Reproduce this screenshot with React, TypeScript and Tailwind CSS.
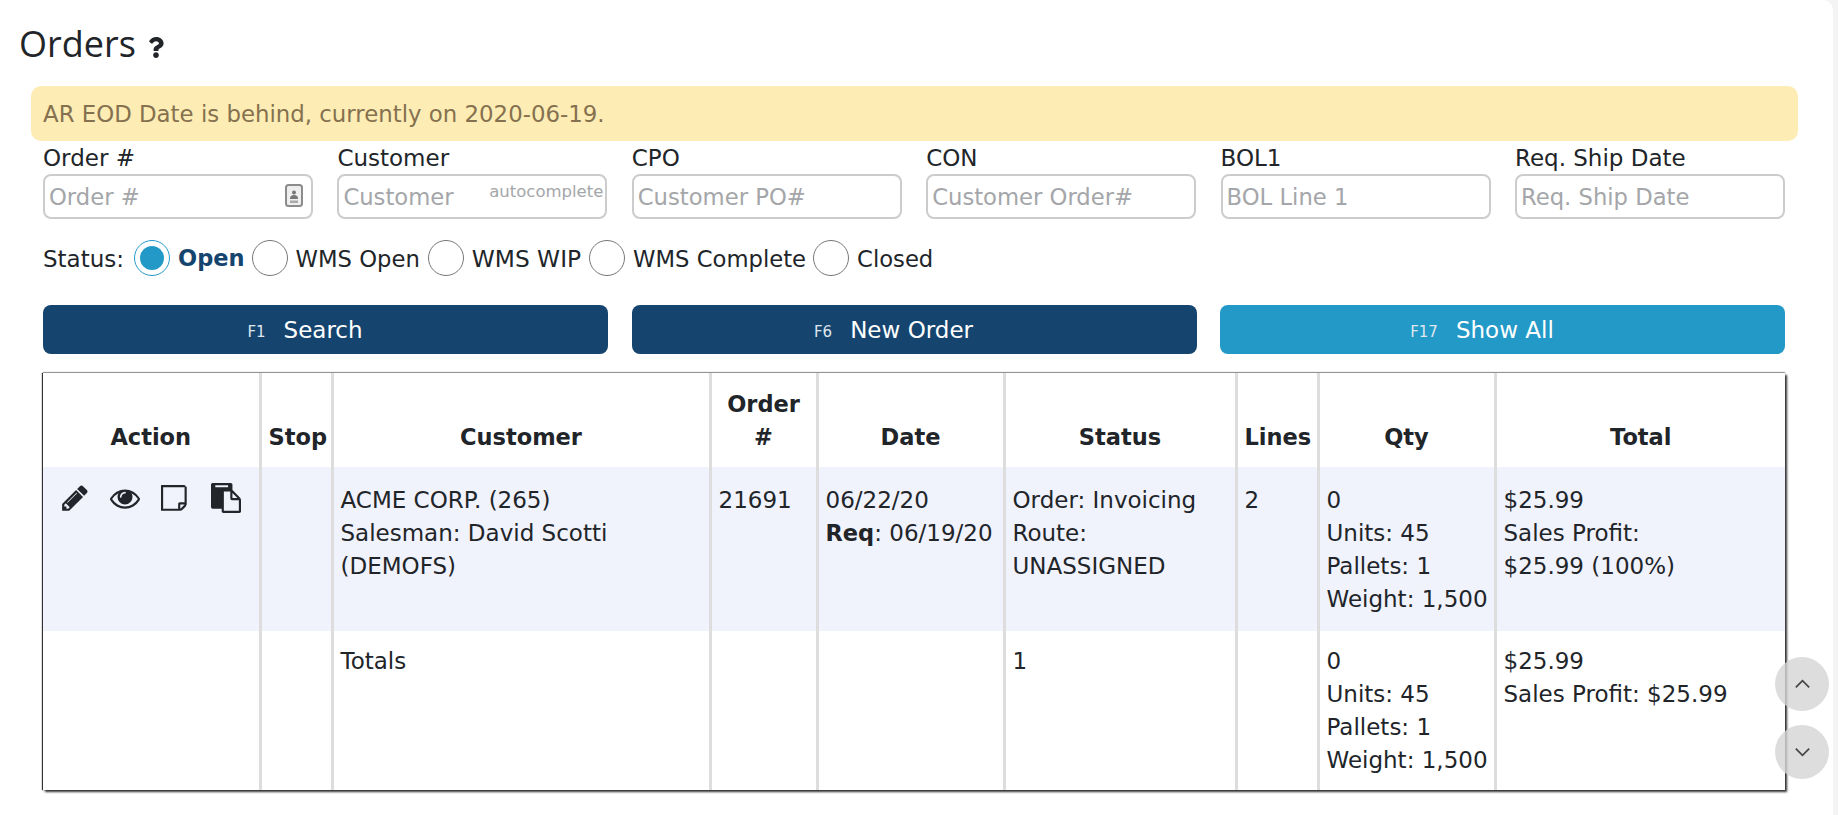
import React from "react";
import { FaQuestion } from "react-icons/fa";

const font = "font-['DejaVu_Sans',sans-serif]";

function Pencil() {
  return (
    <svg viewBox="0 0 1792 1792" className="h-[30px] w-[30px] shrink-0 fill-[#222529]">
      <path d="M491 1536l91-91-235-235-91 91v107h128v128h107zm523-928q0-22-22-22-10 0-17 7l-542 542q-7 7-7 17 0 22 22 22 10 0 17-7l542-542q7-7 7-17zm-54-192l416 416-832 832h-416v-416zm683 96q0 53-37 90l-166 166-416-416 166-165q36-38 90-38 53 0 91 38l235 234q37 39 37 91z" />
    </svg>
  );
}
function Eye() {
  return (
    <svg viewBox="0 0 1792 1792" className="h-[30px] w-[30px] shrink-0 fill-[#222529]">
      <path d="M1664 960q-152-236-381-353 61 104 61 225 0 185-131.5 316.5t-316.5 131.5-316.5-131.5-131.5-316.5q0-121 61-225-229 117-381 353 133 205 333.5 326.5t434.5 121.5 434.5-121.5 333.5-326.5zm-720-384q0-20-14-34t-34-14q-125 0-214.5 89.5t-89.5 214.5q0 20 14 34t34 14 34-14 14-34q0-86 61-147t147-61q20 0 34-14t14-34zm848 384q0 34-20 69-140 230-376.5 368.5t-499.5 138.5-499.5-139-376.5-368q-20-35-20-69t20-69q140-229 376.5-368t499.5-139 499.5 139 376.5 368q20 35 20 69z" />
    </svg>
  );
}
function Note() {
  return (
    <svg viewBox="0 0 1792 1792" className="h-[30px] w-[30px] shrink-0 fill-[#222529]">
      <path d="M1400 1280h-248v248q29-10 41-22l185-185q12-12 22-41zm-280-128h288v-896h-1280v1280h896v-288q0-40 28-68t68-28zm416-928v1024q0 40-20 88t-48 76l-180 180q-28 28-76 48t-88 20h-1088q-40 0-68-28t-28-68v-1344q0-40 28-68t68-28h1344q40 0 68 28t28 68z" />
    </svg>
  );
}
function Paste() {
  return (
    <svg viewBox="0 0 1792 1792" className="h-[30px] w-[30px] shrink-0 fill-[#222529]">
      <path d="M768 1664h896v-640h-416q-40 0-68-28t-28-68v-416h-384v1152zm256-1440v-64q0-13-9.5-22.5t-22.5-9.5h-704q-13 0-22.5 9.5t-9.5 22.5v64q0 13 9.5 22.5t22.5 9.5h704q13 0 22.5-9.5t9.5-22.5zm256 672h299l-299-299v299zm512 128v672q0 40-28 68t-68 28h-960q-40 0-68-28t-28-68v-160h-544q-40 0-68-28t-28-68v-1344q0-40 28-68t68-28h1088q40 0 68 28t28 68v328q21 13 36 28l408 408q28 28 48 76t20 88z" />
    </svg>
  );
}

function Field({ label, ph, extra }: { label: string; ph: string; extra?: React.ReactNode }) {
  return (
    <div className="w-[270px]">
      <div className="h-[33px] pt-[2px] text-[23px] leading-[31px] text-[#212529]">{label}</div>
      <div className="relative h-[45px] rounded-[8px] border-2 border-[#cccccc] bg-white pl-[4px] text-[22.7px] leading-[43px] text-[#a4a6a9]">
        {ph}
        {extra}
      </div>
    </div>
  );
}

function Radio({ on, label, textClass }: { on?: boolean; label: string; textClass?: string }) {
  return (
    <div className="flex items-center">
      <span className={`flex h-[36px] w-[36px] items-center justify-center rounded-full border ${on ? "border-[#2399c8]" : "border-[#777777]"}`}>
        {on && <span className="h-[24px] w-[24px] rounded-full bg-[#2399c8]" />}
      </span>
      <span className={`ml-[8px] pt-[2px] ${on ? "mr-[7px] text-[22.5px] font-bold text-[#15456f]" : textClass ?? "mr-[8px] text-[22.7px] text-[#212529]"}`}>{label}</span>
    </div>
  );
}

function Btn({ fk, label, cyan }: { fk: string; label: string; cyan?: boolean }) {
  return (
    <div className={`flex h-[49px] w-[565px] items-center justify-center rounded-[8px] pr-[41px] pt-[1px] text-white ${cyan ? "bg-[#2399c8]" : "bg-[#15456f]"}`}>
      <span className="mr-[18px] mt-[4px] text-[15px] text-[#dfe6ee]">{fk}</span>
      <span className="text-[23px]">{label}</span>
    </div>
  );
}

const th = "border-l-[3px] border-[#dddddd] px-[7px] pb-[13px] pt-[15px] align-bottom text-center text-[22.5px] font-bold leading-[33px] first:border-l-0";
const td = "whitespace-nowrap border-l-[3px] border-[#dddddd] px-[7px] pt-[17px] pb-[15px] align-top leading-[33px] first:border-l-0";
const tf = "whitespace-nowrap border-l-[3px] border-[#dddddd] px-[7px] pt-[14px] pb-[13px] align-top leading-[33px] first:border-l-0";

export default function App() {
  return (
    <div className={`h-[815px] overflow-hidden bg-[#f4f4f4] ${font}`}>
      <div className="relative h-[815px] w-[1833px] rounded-tr-[10px] bg-white">
        <div className="flex h-[86px] items-start pl-[19px] pt-[19px]">
          <h1 className="font-['Open_Sans',sans-serif] text-[36px] font-normal leading-[50px] text-[#212529]">Orders</h1>
          <FaQuestion className="ml-[12px] mt-[18px] h-[21px] w-[16px] text-[#212529]" />
        </div>
        <div className="ml-[31px] mr-[35px] flex h-[55px] items-center rounded-[10px] bg-[#fdedb4] pl-[12px] pt-[2px] text-[22.85px] text-[#85714f]">
          AR EOD Date is behind, currently on 2020-06-19.
        </div>
        <div className="ml-[43px] mt-0 flex w-[1742px] justify-between">
          <Field
            label="Order #"
            ph="Order #"
            extra={
              <svg viewBox="0 0 18 23" className="absolute right-[8px] top-[8px] h-[23px] w-[18px]">
                <rect x="1" y="1" width="16" height="21" rx="2.5" fill="#eeeeee" stroke="#8c8c8c" strokeWidth="2" />
                <circle cx="9" cy="8.5" r="2" fill="#777777" />
                <path d="M5 15c0-3 1.5-4 4-4s4 1 4 4z" fill="#777777" />
                <rect x="5" y="16.5" width="8" height="2.5" fill="#aaaaaa" />
              </svg>
            }
          />
          <Field
            label="Customer"
            ph="Customer"
            extra={<span className="absolute right-[2px] top-[4px] text-[16.5px] leading-[24px] text-[#a4a6a9]">autocomplete</span>}
          />
          <Field label="CPO" ph="Customer PO#" />
          <Field label="CON" ph="Customer Order#" />
          <Field label="BOL1" ph="BOL Line 1" />
          <Field label="Req. Ship Date" ph="Req. Ship Date" />
        </div>
        <div className="ml-[43px] mt-[21px] flex h-[36px] items-center">
          <span className="mr-[10px] pt-[2px] text-[23px] text-[#212529]">Status:</span>
          <Radio on label="Open" />
          <Radio label="WMS Open" />
          <Radio label="WMS WIP" textClass="mr-[8px] text-[23.3px] text-[#212529]" />
          <Radio label="WMS Complete" textClass="mr-[7px] text-[22.7px] text-[#212529]" />
          <Radio label="Closed" />
        </div>
        <div className="ml-[43px] mt-[29px] flex w-[1742px] justify-between">
          <Btn fk="F1" label="Search" />
          <Btn fk="F6" label="New Order" />
          <Btn fk="F17" label="Show All" cyan />
        </div>
        <div className="ml-[43px] mt-[19px] w-[1742px] shadow-[-1px_0px_1px_#333,2px_2px_2px_#333,0_-1px_1px_#aaa]">
          <table className="w-full table-fixed border-collapse text-[23px] text-[#212529]">
            <colgroup>
              <col className="w-[217px]" />
              <col className="w-[72px]" />
              <col className="w-[378px]" />
              <col className="w-[107px]" />
              <col className="w-[187px]" />
              <col className="w-[232px]" />
              <col className="w-[82px]" />
              <col className="w-[177px]" />
              <col />
            </colgroup>
            <thead>
              <tr>
                <th className={th}>Action</th>
                <th className={th}>Stop</th>
                <th className={th}>Customer</th>
                <th className={th}>Order #</th>
                <th className={th}>Date</th>
                <th className={th}>Status</th>
                <th className={th}>Lines</th>
                <th className={th}>Qty</th>
                <th className={th}>Total</th>
              </tr>
            </thead>
            <tbody>
              <tr className="bg-[#f0f2fc]">
                <td className={td}>
                  <div className="-mt-[1px] flex gap-[20.3px] pl-[10px]">
                    <Pencil />
                    <Eye />
                    <Note />
                    <Paste />
                  </div>
                </td>
                <td className={td}></td>
                <td className={td}>ACME CORP. (265)<br />Salesman: David Scotti<br />(DEMOFS)</td>
                <td className={td}>21691</td>
                <td className={td}>06/22/20<br /><b className="text-[22.5px]">Req</b>: 06/19/20</td>
                <td className={td}>Order: Invoicing<br />Route:<br />UNASSIGNED</td>
                <td className={td}>2</td>
                <td className={td}>0<br />Units: 45<br />Pallets: 1<br />Weight: 1,500</td>
                <td className={td}>$25.99<br />Sales Profit:<br />$25.99 (100%)</td>
              </tr>
              <tr>
                <td className={tf}></td>
                <td className={tf}></td>
                <td className={tf}>Totals</td>
                <td className={tf}></td>
                <td className={tf}></td>
                <td className={tf}>1</td>
                <td className={tf}></td>
                <td className={tf}>0<br />Units: 45<br />Pallets: 1<br />Weight: 1,500</td>
                <td className={tf}>$25.99<br />Sales Profit: $25.99</td>
              </tr>
            </tbody>
          </table>
        </div>
        <div className="absolute left-[1775px] top-[657px] flex h-[54px] w-[54px] items-center justify-center rounded-full bg-[#d4d4d4]/80">
          <svg viewBox="0 0 20 12" className="h-[10px] w-[17px] fill-none stroke-[#444444] stroke-[2]"><path d="M2 10 L10 2 L18 10" /></svg>
        </div>
        <div className="absolute left-[1775px] top-[725px] flex h-[54px] w-[54px] items-center justify-center rounded-full bg-[#d4d4d4]/80">
          <svg viewBox="0 0 20 12" className="h-[10px] w-[17px] fill-none stroke-[#444444] stroke-[2]"><path d="M2 2 L10 10 L18 2" /></svg>
        </div>
      </div>
    </div>
  );
}
